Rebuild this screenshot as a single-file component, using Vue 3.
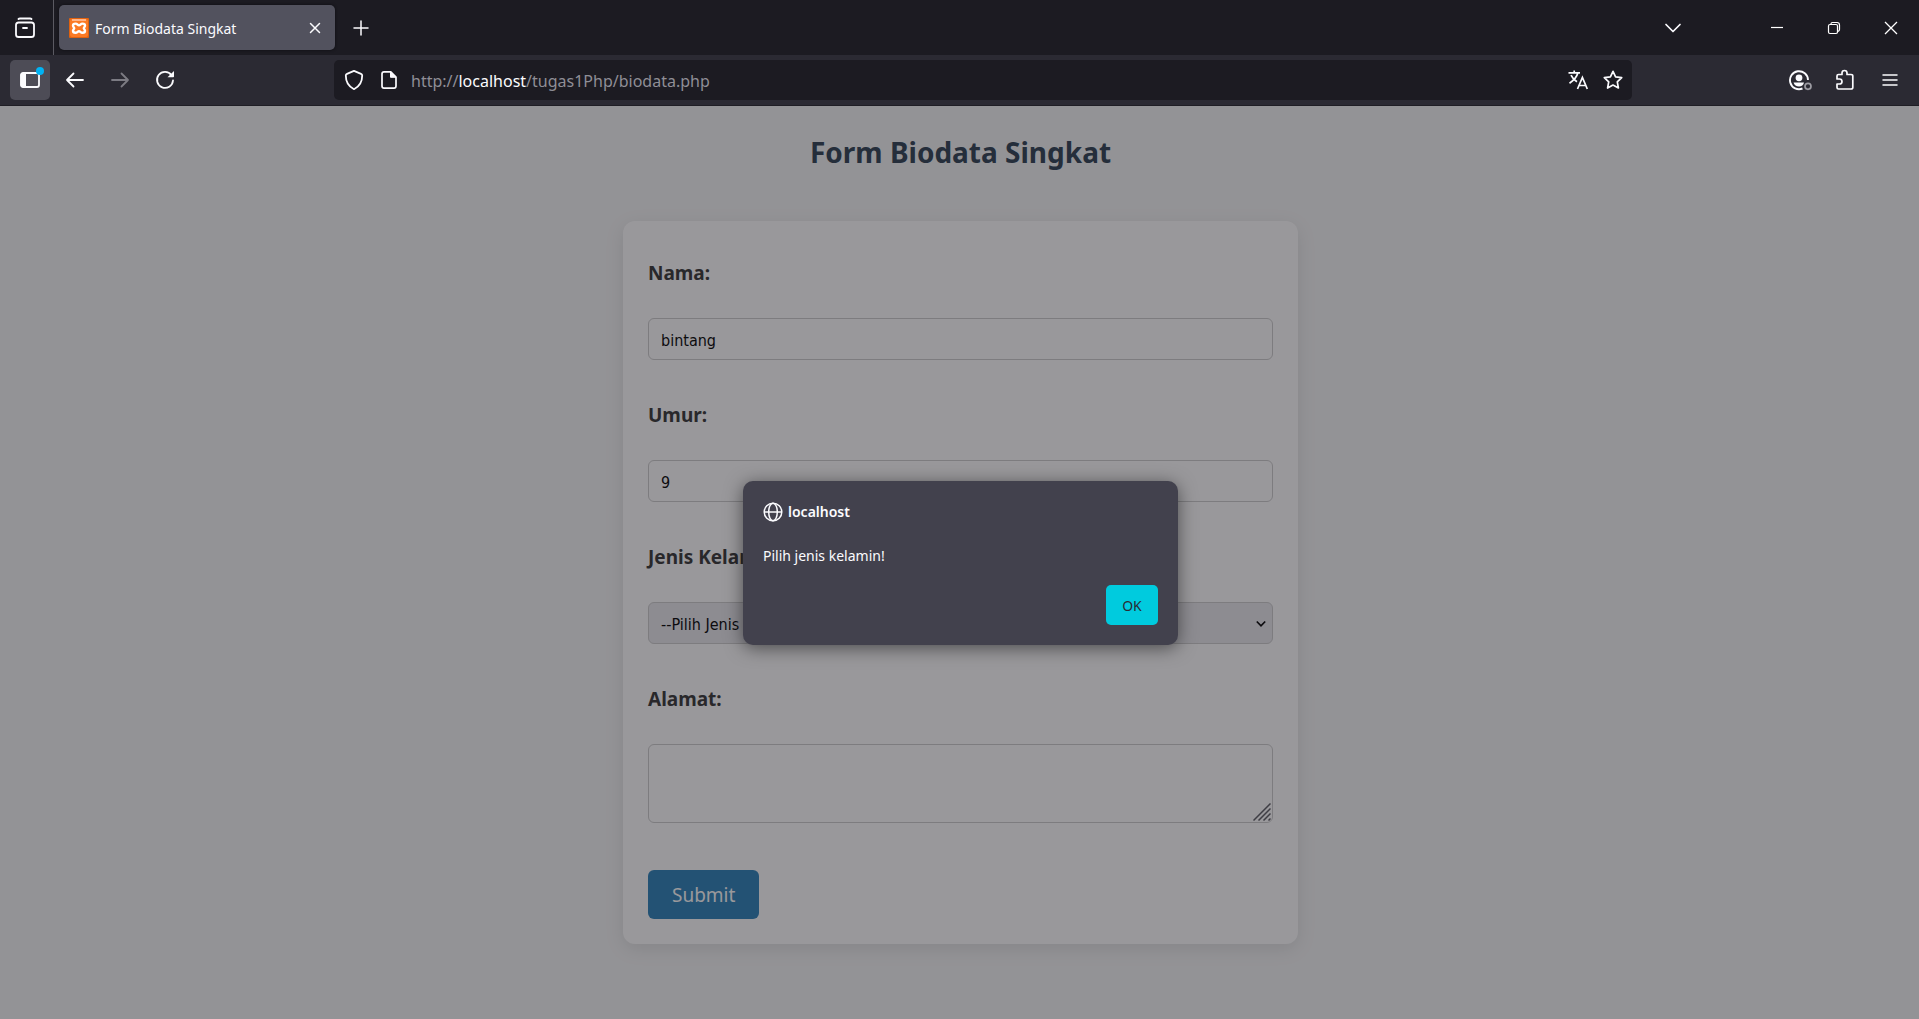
<script setup>
import { ref } from 'vue'

const nama = ref('bintang')
const umur = ref('9')
const kelamin = ref('')
const alamat = ref('')
const url = { scheme: 'http://', host: 'localhost', path: '/tugas1Php/biodata.php' }
</script>

<template>
  <div class="browser">
    <header class="tabbar">
      <button class="tool recent" aria-label="Recent browsing">
        <svg width="22" height="22" viewBox="0 0 22 22" fill="none" stroke="#fbfbfe" stroke-width="1.8" stroke-linecap="round" stroke-linejoin="round">
          <path d="M4.500 2Q5 1.500 6 1.500H16Q17 1.500 17.500 2" />
          <rect x="2" y="5.500" width="18" height="14.500" rx="2.600" />
          <path d="M9 11H13" />
        </svg>
      </button>
      <div class="tab">
        <svg class="favicon" width="20" height="20" viewBox="0 0 20 20">
          <rect width="20" height="20" rx="1" fill="#e0620f" />
          <rect x="1" y="1" width="18" height="18" rx="2" fill="#fb7a24" />
          <rect x="3" y="1" width="14" height="2" fill="#ffb588" />
          <path d="M6.500 5.600C4.500 5.600 4 6.700 4 7.600C4 9.100 5.200 9.300 5.200 10.200C5.200 11.100 4 11.400 4 12.800C4 14 5 14.800 6.500 14.800C8.500 14.800 8.600 13.200 10 13.200C11.400 13.200 11.500 14.800 13.500 14.800C15 14.800 16 14 16 12.800C16 11.400 14.800 11.100 14.800 10.200C14.800 9.300 16 9.100 16 7.600C16 6.700 15.500 5.600 13.500 5.600C11.500 5.600 11.400 7.400 10 7.400C8.600 7.400 8.500 5.600 6.500 5.600Z" fill="none" stroke="#fff" stroke-width="2.400" />
        </svg>
        <span class="tab-title">Form Biodata Singkat</span>
        <button class="tool tab-close" aria-label="Close tab">
          <svg width="12" height="12" viewBox="0 0 12 12" stroke="#fbfbfe" stroke-width="1.500" stroke-linecap="round"><path d="M1.500 1.500L10.500 10.500M10.500 1.500L1.500 10.500" /></svg>
        </button>
      </div>
      <button class="tool new-tab" aria-label="New tab">
        <svg width="16" height="16" viewBox="0 0 16 16" stroke="#fbfbfe" stroke-width="1.500" stroke-linecap="round"><path d="M8 1V15M1 8H15" /></svg>
      </button>
      <div class="window-controls">
        <button class="tool all-tabs" aria-label="List all tabs">
          <svg width="18" height="18" viewBox="0 0 18 18" fill="none" stroke="#fbfbfe" stroke-width="1.700" stroke-linecap="round" stroke-linejoin="round"><path d="M2 5.500L9 12.500L16 5.500" /></svg>
        </button>
        <button class="tool win" aria-label="Minimize">
          <svg width="14" height="14" viewBox="0 0 14 14" stroke="#fff" stroke-width="1.200"><path d="M1 6.500H13" /></svg>
        </button>
        <button class="tool win" aria-label="Restore">
          <svg width="14" height="14" viewBox="0 0 14 14" fill="none" stroke="#fff" stroke-width="1.200"><rect x="1.500" y="3.500" width="9" height="9" rx="1.500" /><path d="M4 3V2.700Q4 1.500 5.500 1.500H10Q12.500 1.500 12.500 4V8.500Q12.500 10 11 10.300" /></svg>
        </button>
        <button class="tool win" aria-label="Close window">
          <svg width="14" height="14" viewBox="0 0 14 14" stroke="#fff" stroke-width="1.300"><path d="M1 1L13 13M13 1L1 13" /></svg>
        </button>
      </div>
    </header>

    <nav class="toolbar">
      <div class="nav-buttons">
        <button class="tool square sidebar-btn" aria-label="Show sidebars">
          <svg width="22" height="18" viewBox="0 0 22 18"><rect x="2" y="2" width="18" height="14" rx="2" fill="none" stroke="#fbfbfe" stroke-width="1.800" /><path d="M3 2H7V16H3Q1.500 16 1.500 14V4Q1.500 2 3 2Z" fill="#fbfbfe" /></svg>
          <span class="dot"></span>
        </button>
        <button class="tool square" aria-label="Back">
          <svg width="20" height="20" viewBox="0 0 20 20" fill="none" stroke="#fbfbfe" stroke-width="1.800" stroke-linecap="round" stroke-linejoin="round"><path d="M18 10H2M8.500 3.500L2 10L8.500 16.500" /></svg>
        </button>
        <button class="tool square" aria-label="Forward" disabled>
          <svg width="20" height="20" viewBox="0 0 20 20" fill="none" stroke="#7c7b83" stroke-width="1.800" stroke-linecap="round" stroke-linejoin="round"><path d="M2 10H18M11.500 3.500L18 10L11.500 16.500" /></svg>
        </button>
        <button class="tool square" aria-label="Reload">
          <svg width="20" height="20" viewBox="0 0 20 20"><path d="M16.500 5.200A8 8 0 1 0 18 10.500" fill="none" stroke="#fbfbfe" stroke-width="1.800" stroke-linecap="round" /><path d="M19 1V6.500Q19 7.300 18.200 7.300H12.500Z" fill="#fbfbfe" /></svg>
        </button>
      </div>
      <div class="urlbar">
        <button class="tool url-tool" aria-label="Tracking protection">
          <svg width="20" height="22" viewBox="0 0 20 22" fill="none" stroke="#fbfbfe" stroke-width="1.800" stroke-linejoin="round"><path d="M10 1.800L17 4.800Q18.200 5.300 18.200 6.500C18.200 13 15.500 17.500 10 20.200C4.500 17.500 1.800 13 1.800 6.500Q1.800 5.300 3 4.800Z" /></svg>
        </button>
        <button class="tool url-tool" aria-label="Site information">
          <svg width="16" height="20" viewBox="0 0 16 20"><path d="M3 1.900H9.800L15 7V16Q15 18.100 13 18.100H3Q1 18.100 1 16V4Q1 1.900 3 1.900Z" fill="none" stroke="#fbfbfe" stroke-width="1.700" stroke-linejoin="round" /><path d="M9.500 2V7.300H15Z" fill="#fbfbfe" stroke="#fbfbfe" stroke-linejoin="round" /></svg>
        </button>
        <span class="url">{{ url.scheme }}<b>{{ url.host }}</b>{{ url.path }}</span>
        <button class="tool url-tool" aria-label="Translate page">
          <svg width="20" height="20" viewBox="0 0 20 20" fill="none" stroke="#fbfbfe" stroke-width="1.700"><path d="M0.500 2.900H12M6.200 0.500V2.900M9.800 3Q8.500 8.500 1.500 13.200M3 5.200Q5 9.500 9 11.800" /><path d="M9.500 19L14.400 7.500L19.300 19M11.300 15.500H17.500" /></svg>
        </button>
        <button class="tool url-tool" aria-label="Bookmark this page">
          <svg width="20" height="20" viewBox="0 0 20 20" fill="none" stroke="#fbfbfe" stroke-width="1.700" stroke-linejoin="round"><path d="M10 1.300L12.600 6.800L18.700 7.600L14.300 11.900L15.400 18L10 15.100L4.600 18L5.700 11.900L1.300 7.600L7.400 6.800Z" /></svg>
        </button>
      </div>
      <div class="actions">
        <button class="tool square" aria-label="Account">
          <svg width="24" height="22" viewBox="0 0 24 22"><path d="M14.500 19.500A9 9 0 1 1 20 11" fill="none" stroke="#fbfbfe" stroke-width="1.900" /><circle cx="11" cy="8.800" r="3.400" fill="#fbfbfe" /><path d="M5.500 13.500H16Q15 17.500 11 17.500Q6.800 17.500 5.500 13.500Z" fill="#fbfbfe" /><circle cx="20" cy="17.300" r="3" fill="none" stroke="#9d9ca3" stroke-width="1.700" /></svg>
        </button>
        <button class="tool square" aria-label="Extensions">
          <svg width="20" height="22" viewBox="0 0 20 22" fill="none" stroke="#fbfbfe" stroke-width="1.700" stroke-linejoin="round"><path d="M2 10V7Q2 5.500 3.500 5.500H7V4A2.500 2.500 0 0 1 12 4V5.500H16Q17.800 5.500 17.800 7V18.500Q17.800 20 16 20H3.500Q2 20 2 18.500V15H4.500A2.500 2.500 0 0 0 4.500 10Z" /></svg>
        </button>
        <button class="tool square" aria-label="Application menu">
          <svg width="16" height="16" viewBox="0 0 16 16" stroke="#fbfbfe" stroke-width="1.500" stroke-linecap="round"><path d="M1 3H15M1 8H15M1 13H15" /></svg>
        </button>
      </div>
    </nav>

    <div class="viewport">
      <main class="page">
        <h1>Form Biodata Singkat</h1>
        <form class="card" @submit.prevent>
          <div class="field">
            <label for="nama">Nama:</label>
            <input id="nama" v-model="nama" type="text" />
          </div>
          <div class="field">
            <label for="umur">Umur:</label>
            <input id="umur" v-model="umur" type="text" />
          </div>
          <div class="field">
            <label for="kelamin">Jenis Kelamin:</label>
            <div class="control">
              <select id="kelamin" v-model="kelamin">
                <option value="">--Pilih Jenis Kelamin--</option>
                <option value="L">Laki-laki</option>
                <option value="P">Perempuan</option>
              </select>
              <svg class="arrow" width="10" height="8" viewBox="0 0 10 8" fill="none" stroke="#000" stroke-width="1.700"><path d="M0.800 1.500L5 5.800L9.200 1.500" /></svg>
            </div>
          </div>
          <div class="field">
            <label for="alamat">Alamat:</label>
            <div class="control">
              <textarea id="alamat" v-model="alamat"></textarea>
              <svg class="grip" width="18" height="18" viewBox="0 0 18 18" stroke="#5a5961" stroke-width="1.500"><path d="M0.500 17.500L17.500 0.500M5.500 17.500L17.500 5.500M10.500 17.500L17.500 10.500M15.500 17.500L17.500 15.500" /></svg>
            </div>
          </div>
          <button class="submit" type="submit">Submit</button>
        </form>
      </main>

      <div class="overlay">
        <section class="dialog" role="alertdialog" aria-labelledby="origin" aria-describedby="message">
          <div id="origin" class="origin">
            <svg width="20" height="20" viewBox="0 0 20 20" fill="none" stroke="#fbfbfe" stroke-width="1.500"><circle cx="10" cy="10" r="8.800" /><ellipse cx="10" cy="10" rx="4.300" ry="8.800" /><path d="M1.200 10H18.800" /></svg>
            <span>localhost</span>
          </div>
          <p id="message">Pilih jenis kelamin!</p>
          <button class="ok">OK</button>
        </section>
      </div>
    </div>
  </div>
</template>

<style>
body {
  margin: 0;
}
</style>

<style scoped>
* {
  box-sizing: border-box;
}
.browser {
  display: flex;
  flex-direction: column;
  min-height: 100vh;
  font-family: "Noto Sans", "Open Sans", sans-serif;
  color: #fbfbfe;
}
svg {
  display: block;
  flex: none;
}
button {
  font-family: inherit;
  border: 0;
  cursor: pointer;
}
.tool {
  display: flex;
  align-items: center;
  justify-content: center;
  flex: none;
  padding: 0;
  background: none;
}
.tabbar {
  display: flex;
  align-items: center;
  height: 55px;
  background: #1c1b22;
}
.recent {
  width: 54px;
  height: 55px;
  padding-right: 4px;
  border-right: 1px solid #5b5a62;
}
.tab {
  display: flex;
  align-items: center;
  width: 276px;
  height: 45px;
  margin-left: 5px;
  padding: 0 10px;
  border-radius: 5px;
  background: #52525e;
  box-shadow: 0 0 3px #0c0c10;
}
.tab-title {
  flex: 1;
  margin-left: 6px;
  padding-top: 2px;
  font-size: 14px;
  white-space: nowrap;
}
.tab-close {
  width: 20px;
  height: 20px;
}
.new-tab {
  width: 40px;
  height: 40px;
  margin-left: 6px;
}
.window-controls {
  display: flex;
  margin-left: auto;
}
.all-tabs {
  width: 40px;
  margin-right: 55px;
}
.win {
  width: 57px;
  height: 55px;
}
.toolbar {
  display: flex;
  align-items: center;
  justify-content: space-between;
  height: 51px;
  padding: 0 9px 0 10px;
  background: #2b2a33;
  border-bottom: 1px solid #1f1e25;
}
.nav-buttons,
.actions {
  display: flex;
  flex: 1 1 0;
  gap: 5px;
}
.actions {
  justify-content: flex-end;
}
.square {
  width: 40px;
  height: 40px;
  border-radius: 5px;
}
.sidebar-btn {
  position: relative;
  background: #4d4c56;
}
.dot {
  position: absolute;
  top: 7px;
  right: 6px;
  width: 8px;
  height: 8px;
  border-radius: 50%;
  background: #00b3f4;
}
.urlbar {
  display: flex;
  align-items: center;
  width: 69%;
  max-width: 1298px;
  height: 40px;
  margin-left: 46px;
  padding: 0 2px;
  border-radius: 5px;
  background: #1c1b22;
}
.url-tool {
  width: 35px;
  height: 40px;
}
.url {
  flex: 1;
  margin-left: 5px;
  padding-top: 2px;
  font-size: 16px;
  color: #8f8e96;
}
.url b {
  font-weight: 400;
  color: #fbfbfe;
}
.viewport {
  position: relative;
  flex: 1;
  background: #f5f6f6;
}
.page {
  display: flex;
  flex-direction: column;
  align-items: center;
  padding: 23px 20px 75px 22px;
}
h1 {
  margin: 0 0 46px;
  font-size: 28px;
  line-height: 46px;
  color: #2c3e50;
}
.card {
  width: 100%;
  max-width: 675px;
  padding: 25px;
  border-radius: 12px;
  background: #fff;
  box-shadow: 0 5px 19px rgba(0, 0, 0, 0.1);
}
.field {
  margin-bottom: 28px;
}
label {
  display: block;
  margin-bottom: 18px;
  font-size: 19px;
  font-weight: 700;
  line-height: 54px;
  color: #333;
}
input,
select,
textarea {
  display: block;
  width: 100%;
  height: 42px;
  padding: 2px 12px 0;
  border: 1px solid #ccc;
  border-radius: 6px;
  background: #fff;
  font-family: "DejaVu Sans Condensed", "DejaVu Sans", sans-serif;
  font-size: 16px;
  color: #000;
}
select {
  appearance: none;
  background: #e9e9ed;
}
textarea {
  height: 79px;
  padding: 12px;
  resize: none;
}
.control {
  position: relative;
}
.arrow {
  position: absolute;
  top: 18px;
  right: 7px;
  pointer-events: none;
}
.grip {
  position: absolute;
  right: 2px;
  bottom: 2px;
}
.submit {
  display: block;
  height: 49px;
  margin-top: 47px;
  padding: 0 24px;
  border-radius: 6px;
  background: #2980b9;
  font-size: 19px;
  color: #fff;
}
.overlay {
  position: absolute;
  inset: 0;
  display: flex;
  align-items: flex-start;
  justify-content: center;
  padding: 375px 20px 0 22px;
  background: rgba(28, 27, 34, 0.45);
}
.dialog {
  display: flex;
  flex-direction: column;
  width: 435px;
  padding: 20px;
  border-radius: 10px;
  background: #42414d;
  box-shadow: 0 3px 18px rgba(0, 0, 0, 0.5), 0 0 1px #8f8f96;
}
.origin {
  display: flex;
  align-items: center;
  gap: 5px;
  font-size: 14px;
  font-weight: 600;
  line-height: 22px;
}
.dialog p {
  margin: 22px 0 18px;
  font-size: 14px;
  line-height: 22px;
}
.ok {
  align-self: flex-end;
  width: 52px;
  height: 40px;
  border-radius: 5px;
  background: #00cbde;
  font-size: 14px;
  color: #2b2a33;
}
</style>
